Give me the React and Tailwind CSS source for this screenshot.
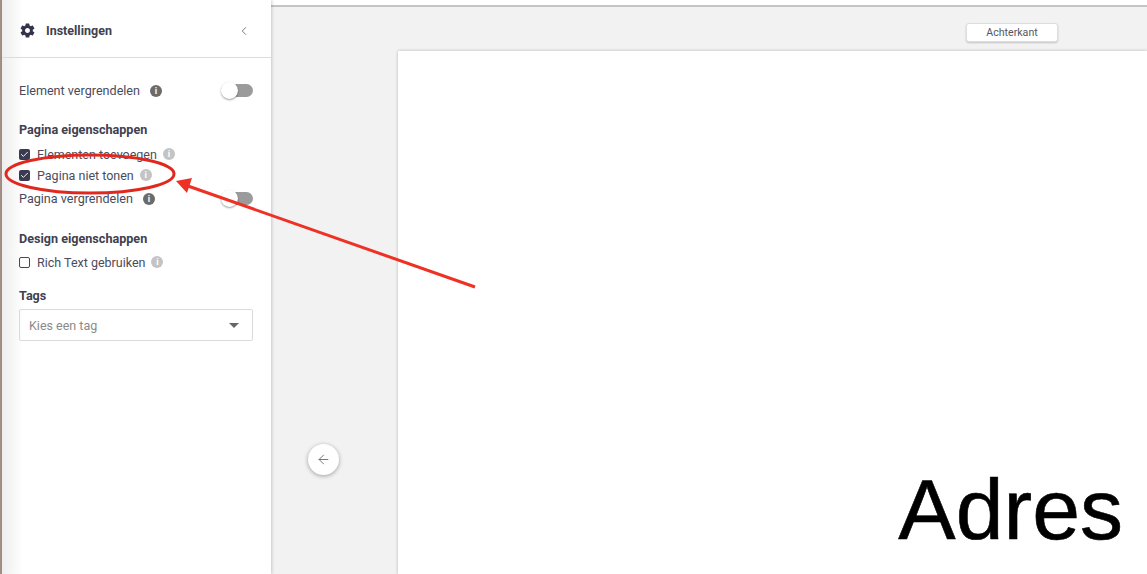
import { ArrowLeft, ChevronLeft, Check } from "lucide-react";

function InfoDot({ light }) {
  return (
    <span
      className={`flex h-3 w-3 shrink-0 items-center justify-center rounded-full text-[9px] font-bold leading-none text-white ${
        light ? "mt-[-2px] bg-[#c4c4c4]" : "bg-[#6b6b6b]"
      }`}
    >
      i
    </span>
  );
}

function Toggle() {
  return (
    <div className="relative mt-[-2px] h-[13px] w-8">
      <div className="absolute right-0 top-0 h-[13px] w-6 rounded-full bg-[#9b9b9b]" />
      <div className="absolute left-0 top-[-2px] h-[17px] w-[17px] rounded-full bg-white shadow-[0_1px_2px_rgba(0,0,0,0.4)]" />
    </div>
  );
}

function CheckRow({ label, checked, className }) {
  return (
    <div className={`flex items-center ${className}`}>
      <span
        className={`mr-[7px] mt-[-2px] flex h-[11px] w-[11px] items-center justify-center rounded-[2px] ${
          checked ? "bg-[#3a3b50]" : "border border-[#45465a]"
        }`}
      >
        {checked && <Check size={9} strokeWidth={2.5} className="text-white" />}
      </span>
      <span className="mr-[6px] text-[12.5px] leading-4 text-[#4a4b5c]">{label}</span>
      <InfoDot light />
    </div>
  );
}

function Heading({ children, className }) {
  return <div className={`text-[12.6px] font-bold leading-4 text-[#40414f] ${className}`}>{children}</div>;
}

export default function App() {
  return (
    <div className="relative flex h-[574px] w-[1147px] overflow-hidden bg-white font-['Roboto',sans-serif]">
      <div className="w-[2px] bg-[#a58f87]" />

      <aside className="z-10 flex w-[269px] shrink-0 flex-col bg-gradient-to-r from-[#eeeeee] via-white via-[8%] to-white shadow-[1px_0_3px_rgba(0,0,0,0.18)]">
        <div className="mt-[5px] flex h-[53px] items-center border-b border-[#dcdcdc] pl-[17px] pr-[20px]">
          <svg width="17" height="17" viewBox="0 0 24 24" className="mr-[10px] mt-[-2px] fill-[#33344a]">
            <path d="M19.43 12.98c.04-.32.07-.64.07-.98s-.03-.66-.07-.98l2.11-1.65c.19-.15.24-.42.12-.64l-2-3.46c-.12-.22-.39-.3-.61-.22l-2.49 1c-.52-.4-1.08-.73-1.69-.98l-.38-2.65C14.46 2.18 14.25 2 14 2h-4c-.25 0-.46.18-.49.42l-.38 2.65c-.61.25-1.17.59-1.69.98l-2.49-1c-.23-.09-.49 0-.61.22l-2 3.46c-.13.22-.07.49.12.64l2.11 1.65c-.04.32-.07.65-.07.98s.03.66.07.98l-2.11 1.65c-.19.15-.24.42-.12.64l2 3.46c.12.22.39.3.61.22l2.49-1c.52.4 1.08.73 1.69.98l.38 2.65c.03.24.24.42.49.42h4c.25 0 .46-.18.49-.42l.38-2.65c.61-.25 1.17-.59 1.69-.98l2.49 1c.23.09.49 0 .61-.22l2-3.46c.12-.22.07-.49-.12-.64l-2.11-1.65zM12 15.5c-1.93 0-3.5-1.57-3.5-3.5s1.57-3.5 3.5-3.5 3.5 1.57 3.5 3.5-1.57 3.5-3.5 3.5z" />
          </svg>
          <span className="text-[12.5px] font-bold text-[#40414f]">Instellingen</span>
          <ChevronLeft size={14} strokeWidth={1.5} className="ml-auto text-[#6b6b6b]" />
        </div>

        <div className="flex flex-col pl-[17px] pr-[18px]">
          <div className="mt-[25px] flex h-4 items-center">
            <span className="mr-[10px] text-[12.6px] text-[#4a4b5c]">Element vergrendelen</span>
            <InfoDot />
            <div className="ml-auto">
              <Toggle />
            </div>
          </div>

          <Heading className="mt-[23px]">Pagina eigenschappen</Heading>
          <CheckRow checked label="Elementen toevoegen" className="mt-[9px] h-4" />
          <CheckRow checked label="Pagina niet tonen" className="mt-[5px] h-4" />

          <div className="mt-[7px] flex h-4 items-center">
            <span className="mr-[10px] text-[12.6px] text-[#4a4b5c]">Pagina vergrendelen</span>
            <InfoDot />
            <div className="ml-auto">
              <Toggle />
            </div>
          </div>

          <Heading className="mt-[24px]">Design eigenschappen</Heading>
          <CheckRow label="Rich Text gebruiken" className="mt-[8px] h-4" />

          <Heading className="mt-[17px]">Tags</Heading>
          <div className="mt-[5px] flex h-[32px] items-center rounded-[2px] border border-[#dadada] pl-[9px] pr-[13px]">
            <span className="pt-[2px] text-[12.5px] text-[#8a8a8a]">Kies een tag</span>
            <span className="ml-auto h-0 w-0 border-x-[5px] border-t-[5px] border-x-transparent border-t-[#666666]" />
          </div>
        </div>
      </aside>

      <main className="flex min-w-0 flex-1 flex-col bg-[#f2f2f2]">
        <div className="h-[7px] shrink-0 border-b-2 border-[#c4c4c4] bg-white" />
        <div className="flex h-[44px] shrink-0 justify-end pr-[89px] pt-[16px]">
          <button className="h-[19px] w-[92px] rounded-[3px] border border-[#dedede] bg-white pt-[1px] text-[10.6px] leading-none text-[#55565f] shadow-[0_1px_2px_rgba(0,0,0,0.2)]">
            Achterkant
          </button>
        </div>
        <div className="flex flex-1">
          <div className="flex w-[127px] shrink-0 items-start pl-[37px] pt-[393px]">
            <button className="flex h-[31px] w-[31px] items-center justify-center rounded-full bg-white shadow-[0_1px_4px_rgba(0,0,0,0.35)]">
              <ArrowLeft size={15} strokeWidth={1.5} className="text-[#6f6f6f]" />
            </button>
          </div>
          <div className="flex flex-1 items-end justify-end bg-white pb-[22px] pr-[24px] shadow-[0_0_3px_rgba(0,0,0,0.25)]">
            <span className="font-['Liberation_Sans',sans-serif] text-[86px] leading-none text-black [-webkit-text-stroke:0.6px_black]">
              Adres
            </span>
          </div>
        </div>
      </main>

      <svg className="pointer-events-none absolute left-0 top-0 z-20" width="1147" height="574" viewBox="0 0 1147 574">
        <ellipse cx="90" cy="174" rx="84" ry="19" fill="none" stroke="#e0281f" strokeWidth="3" />
        <line x1="475" y1="287" x2="188" y2="186" stroke="#ee3124" strokeWidth="3" />
        <polygon points="176,181 192,178 187,193" fill="#ee3124" />
      </svg>
    </div>
  );
}
